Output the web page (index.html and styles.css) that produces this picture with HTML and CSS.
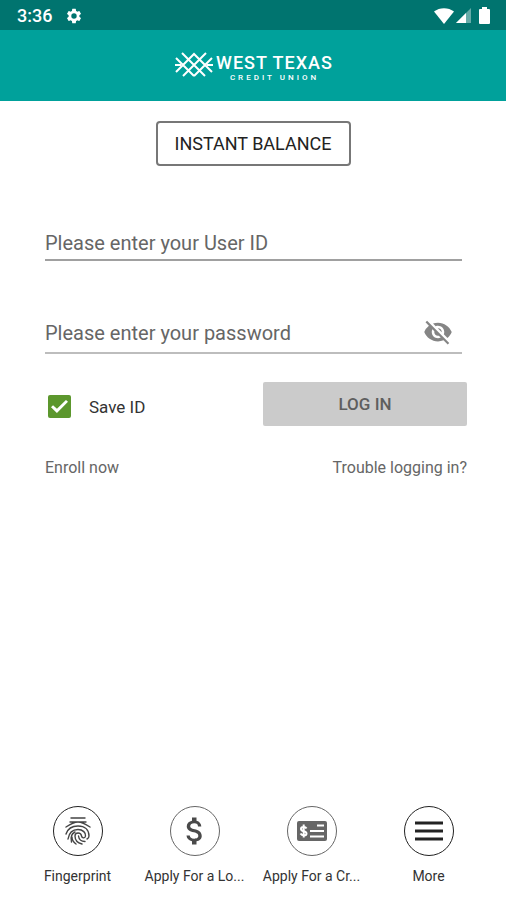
FILE: index.html
```html
<!DOCTYPE html>
<html lang="en">
<head>
<meta charset="utf-8">
<meta name="viewport" content="width=device-width, initial-scale=1">
<title>West Texas Credit Union</title>
<link rel="stylesheet" href="styles.css">
</head>
<body>
<div class="status">
  <span class="clock">3:36</span>
  <svg class="gear" viewBox="0 0 24 24" aria-hidden="true"><path d="M19.14 12.94c.04-.3.06-.61.06-.94 0-.32-.02-.64-.07-.94l2.03-1.58a.49.49 0 0 0 .12-.61l-1.92-3.32a.49.49 0 0 0-.59-.22l-2.39.96a7.03 7.03 0 0 0-1.62-.94l-.36-2.54a.48.48 0 0 0-.48-.41h-3.84a.47.47 0 0 0-.47.41l-.36 2.54c-.59.24-1.13.57-1.62.94l-2.39-.96a.48.48 0 0 0-.59.22L2.74 8.87a.47.47 0 0 0 .12.61l2.03 1.58c-.05.3-.09.63-.09.94s.02.64.07.94l-2.03 1.58a.49.49 0 0 0-.12.61l1.92 3.32c.12.22.37.29.59.22l2.39-.96c.5.38 1.03.7 1.62.94l.36 2.54c.05.24.24.41.48.41h3.84c.24 0 .44-.17.47-.41l.36-2.54c.59-.24 1.13-.56 1.62-.94l2.39.96c.22.08.47 0 .59-.22l1.92-3.32a.47.47 0 0 0-.12-.61l-2.01-1.58zM12 15.6a3.6 3.6 0 1 1 0-7.2 3.6 3.6 0 0 1 0 7.2z"/></svg>
  <svg class="signals" viewBox="0 0 58 20" aria-hidden="true">
    <path d="M0 5.500C5.500 1 14.500 1 20 5.500L10 18z"/>
    <path d="M37 2v15H22z" opacity=".4"/>
    <path d="M32 7v10H22z"/>
    <path d="M48 3V1h5v2h2q1 0 1 1v13q0 1-1 1h-9q-1 0-1-1V4q0-1 1-1z"/>
  </svg>
</div>
<header class="header">
  <svg class="mark" viewBox="0 0 38 27" aria-hidden="true">
    <path d="M7 1L30 24M31 1L8 24M1 6L19 24M37 6L19 24M1 20L19 2L37 20M0 13h6M32 13h6"/>
  </svg>
  <div class="brand">
    <span class="brand-name">WEST TEXAS</span>
    <span class="brand-sub">CREDIT UNION</span>
  </div>
</header>
<main class="main">
  <button class="balance" type="button">INSTANT BALANCE</button>
  <form class="login">
    <div class="field">
      <input type="text" placeholder="Please enter your User ID" aria-label="User ID">
    </div>
    <div class="field field-password">
      <input type="password" placeholder="Please enter your password" aria-label="Password">
      <button class="eye" type="button" aria-label="Show password">
        <svg viewBox="0 0 24 24" aria-hidden="true"><path d="M12 7c2.760 0 5 2.240 5 5 0 .65-.13 1.260-.36 1.830l2.920 2.920c1.510-1.260 2.700-2.890 3.430-4.750-1.730-4.390-6-7.500-11-7.500-1.400 0-2.740.25-3.980.7l2.160 2.160C10.740 7.130 11.350 7 12 7zM2 4.270l2.280 2.280.46.46A11.800 11.800 0 0 0 1 12c1.730 4.390 6 7.500 11 7.500 1.550 0 3.030-.3 4.380-.84l.42.42L19.730 22 21 20.730 3.270 3 2 4.270zM7.530 9.800l1.550 1.550c-.05.21-.08.43-.08.65 0 1.660 1.340 3 3 3 .22 0 .44-.03.65-.08l1.550 1.550c-.67.33-1.410.53-2.200.53-2.760 0-5-2.240-5-5 0-.79.2-1.530.53-2.200zm4.310-.78l3.150 3.150.02-.16c0-1.660-1.340-3-3-3l-.17.01z"/></svg>
      </button>
    </div>
    <div class="row">
      <label class="save"><input type="checkbox" checked>Save ID</label>
      <button class="submit" type="submit" disabled>LOG IN</button>
    </div>
  </form>
  <div class="links">
    <a href="#enroll">Enroll now</a>
    <a href="#help">Trouble logging in?</a>
  </div>
</main>
<nav class="nav">
  <a class="item" href="#fingerprint">
    <span class="ring dark"><svg class="finger" viewBox="0 0 28 30" aria-hidden="true">
      <path d="M7 2H21M6 6H22M2 11C8 7 10 6 14 6C18 6 20 7 26 11M2 18C4 12 8 10 14 10C21 10 25 14 25 20Q25 22 23 23M4 23C5 17 8 13.500 14 13.500C19 13.500 22 17 21.500 20C21 23 18 22 17.500 20C17 16 11 16 11 20C11 24 14 27 18 28M7.500 26C6 20 9 17 11 16M12 28C9 26 8 23 8 21M14.500 20C15 24 18 25.500 21 25.500"/>
    </svg></span>
    <span class="label">Fingerprint</span>
  </a>
  <a class="item" href="#loan">
    <span class="ring"><svg class="dollar" viewBox="0 0 24 24" aria-hidden="true"><path d="M11.800 10.900c-2.270-.59-3-1.200-3-2.150 0-1.090 1.010-1.850 2.700-1.850 1.780 0 2.440.85 2.500 2.100h2.210c-.07-1.720-1.120-3.300-3.210-3.810V3h-3v2.160c-1.940.42-3.500 1.680-3.500 3.610 0 2.310 1.910 3.460 4.700 4.130 2.500.6 3 1.480 3 2.410 0 .69-.49 1.790-2.700 1.790-2.060 0-2.870-.92-2.980-2.100h-2.200c.12 2.190 1.760 3.420 3.680 3.830V21h3v-2.150c1.950-.37 3.500-1.500 3.500-3.550 0-2.840-2.430-3.810-4.700-4.400z"/></svg></span>
    <span class="label">Apply For a Lo...</span>
  </a>
  <a class="item" href="#card">
    <span class="ring"><svg class="card" viewBox="0 0 30 20" aria-hidden="true">
      <rect width="30" height="20" rx="2"/>
      <path class="cut" d="M20 4.500h7M13 10h14M13 15.500h14"/>
      <path class="sign" d="M9.500 7.500C8.500 5.500 4 5.500 4 8c0 3 5.500 1.500 5.500 4.500 0 2.500-4.500 2.500-6 0M6.700 3.500v13"/>
    </svg></span>
    <span class="label">Apply For a Cr...</span>
  </a>
  <a class="item" href="#more">
    <span class="ring dark"><svg class="bars" viewBox="0 0 28 20" aria-hidden="true"><path d="M0 2h28M0 10h28M0 18h28"/></svg></span>
    <span class="label">More</span>
  </a>
</nav>
</body>
</html>
```
FILE: styles.css
```css
* { box-sizing: border-box; }
body {
  margin: 0;
  min-height: 100vh;
  display: flex;
  flex-direction: column;
  background: #fff;
  color: #333;
  font-family: Roboto, "Liberation Sans", sans-serif;
}
button, input { font: inherit; color: inherit; }
a { color: inherit; text-decoration: none; }

.status {
  height: 30px;
  padding: 2px 14px 0 17px;
  display: flex;
  align-items: center;
  background: #00746f;
  color: #fff;
}
.clock { font-size: 18px; font-weight: 500; line-height: 28px; }
.gear { width: 18px; height: 18px; margin-left: 13px; fill: #fff; }
.signals { width: 58px; height: 20px; margin-left: auto; fill: #fff; }

.header {
  height: 71px;
  padding: 4px 0 0 2px;
  display: flex;
  justify-content: center;
  align-items: center;
  gap: 3px;
  background: #00a19b;
  color: #fff;
}
.mark { width: 38px; height: 27px; margin-bottom: 4px; fill: none; stroke: #fff; stroke-width: 2; }
.brand { display: flex; flex-direction: column; align-items: center; }
.brand-name { font-size: 18px; line-height: 20px; font-weight: 500; letter-spacing: 1px; }
.brand-sub { font-size: 8px; line-height: 10px; font-weight: 500; letter-spacing: 3px; }

.main { padding: 20px 39px 0 45px; display: flex; flex-direction: column; }
.balance {
  align-self: center;
  height: 45px;
  margin-right: 6px;
  padding: 0 17px;
  border: 2px solid #777;
  border-radius: 4px;
  background: #fff;
  color: #222;
  font-size: 18px;
}
.login { margin-top: 57px; }
.field {
  height: 38px;
  margin: 0 5px 0 0;
  display: flex;
  align-items: center;
  border-bottom: 2px solid #a0a0a0;
}
.field input {
  flex: 1;
  min-width: 0;
  padding: 3px 0 0;
  border: 0;
  outline: 0;
  background: none;
  font-size: 20px;
}
.field input::placeholder { color: #666; opacity: 1; }
.field-password { height: 43px; margin-top: 50px; border-color: #bdbdbd; }
.eye { width: 30px; height: 30px; margin-right: 9px; padding: 0; border: 0; background: none; }
.eye svg { display: block; width: 30px; height: 30px; fill: #858585; }
.row { margin-top: 28px; display: flex; justify-content: space-between; align-items: center; }
.save { display: flex; align-items: center; gap: 18px; padding: 5px 0 0 3px; font-size: 17px; }
.save input {
  appearance: none;
  width: 23px;
  height: 23px;
  margin: 0;
  border-radius: 2px;
  background: #5c972d;
  display: grid;
  place-items: center;
}
.save input:checked::before {
  content: "";
  width: 17px;
  height: 13px;
  background: #fff;
  clip-path: polygon(0 55%, 12% 40%, 35% 68%, 88% 0, 100% 14%, 35% 100%);
}
.submit {
  width: 204px;
  height: 44px;
  border: 0;
  border-radius: 2px;
  background: #cbcbcb;
  color: #5e5e5e;
  font-size: 17px;
  font-weight: 500;
}
.links { margin-top: 30px; display: flex; justify-content: space-between; font-size: 16px; line-height: 24px; color: #666; }

.nav { margin: auto 19px 0; padding-bottom: 14px; display: grid; grid-template-columns: repeat(4, 1fr); }
.item { display: flex; flex-direction: column; align-items: center; gap: 10px; }
.ring {
  width: 50px;
  height: 50px;
  display: grid;
  place-items: center;
  border: 1px solid #666;
  border-radius: 50%;
}
.ring.dark { border-color: #222; }
.finger { width: 28px; height: 30px; fill: none; stroke: #444; stroke-width: 1.4; stroke-linecap: round; }
.dollar { width: 36px; height: 36px; fill: #4a4a4a; }
.card { width: 30px; height: 20px; fill: #666; }
.cut { stroke: #fff; stroke-width: 2; }
.sign { fill: none; stroke: #fff; stroke-width: 2; }
.bars { width: 28px; height: 20px; stroke: #222; stroke-width: 3; }
.label { font-size: 14px; line-height: 20px; white-space: nowrap; }
```
